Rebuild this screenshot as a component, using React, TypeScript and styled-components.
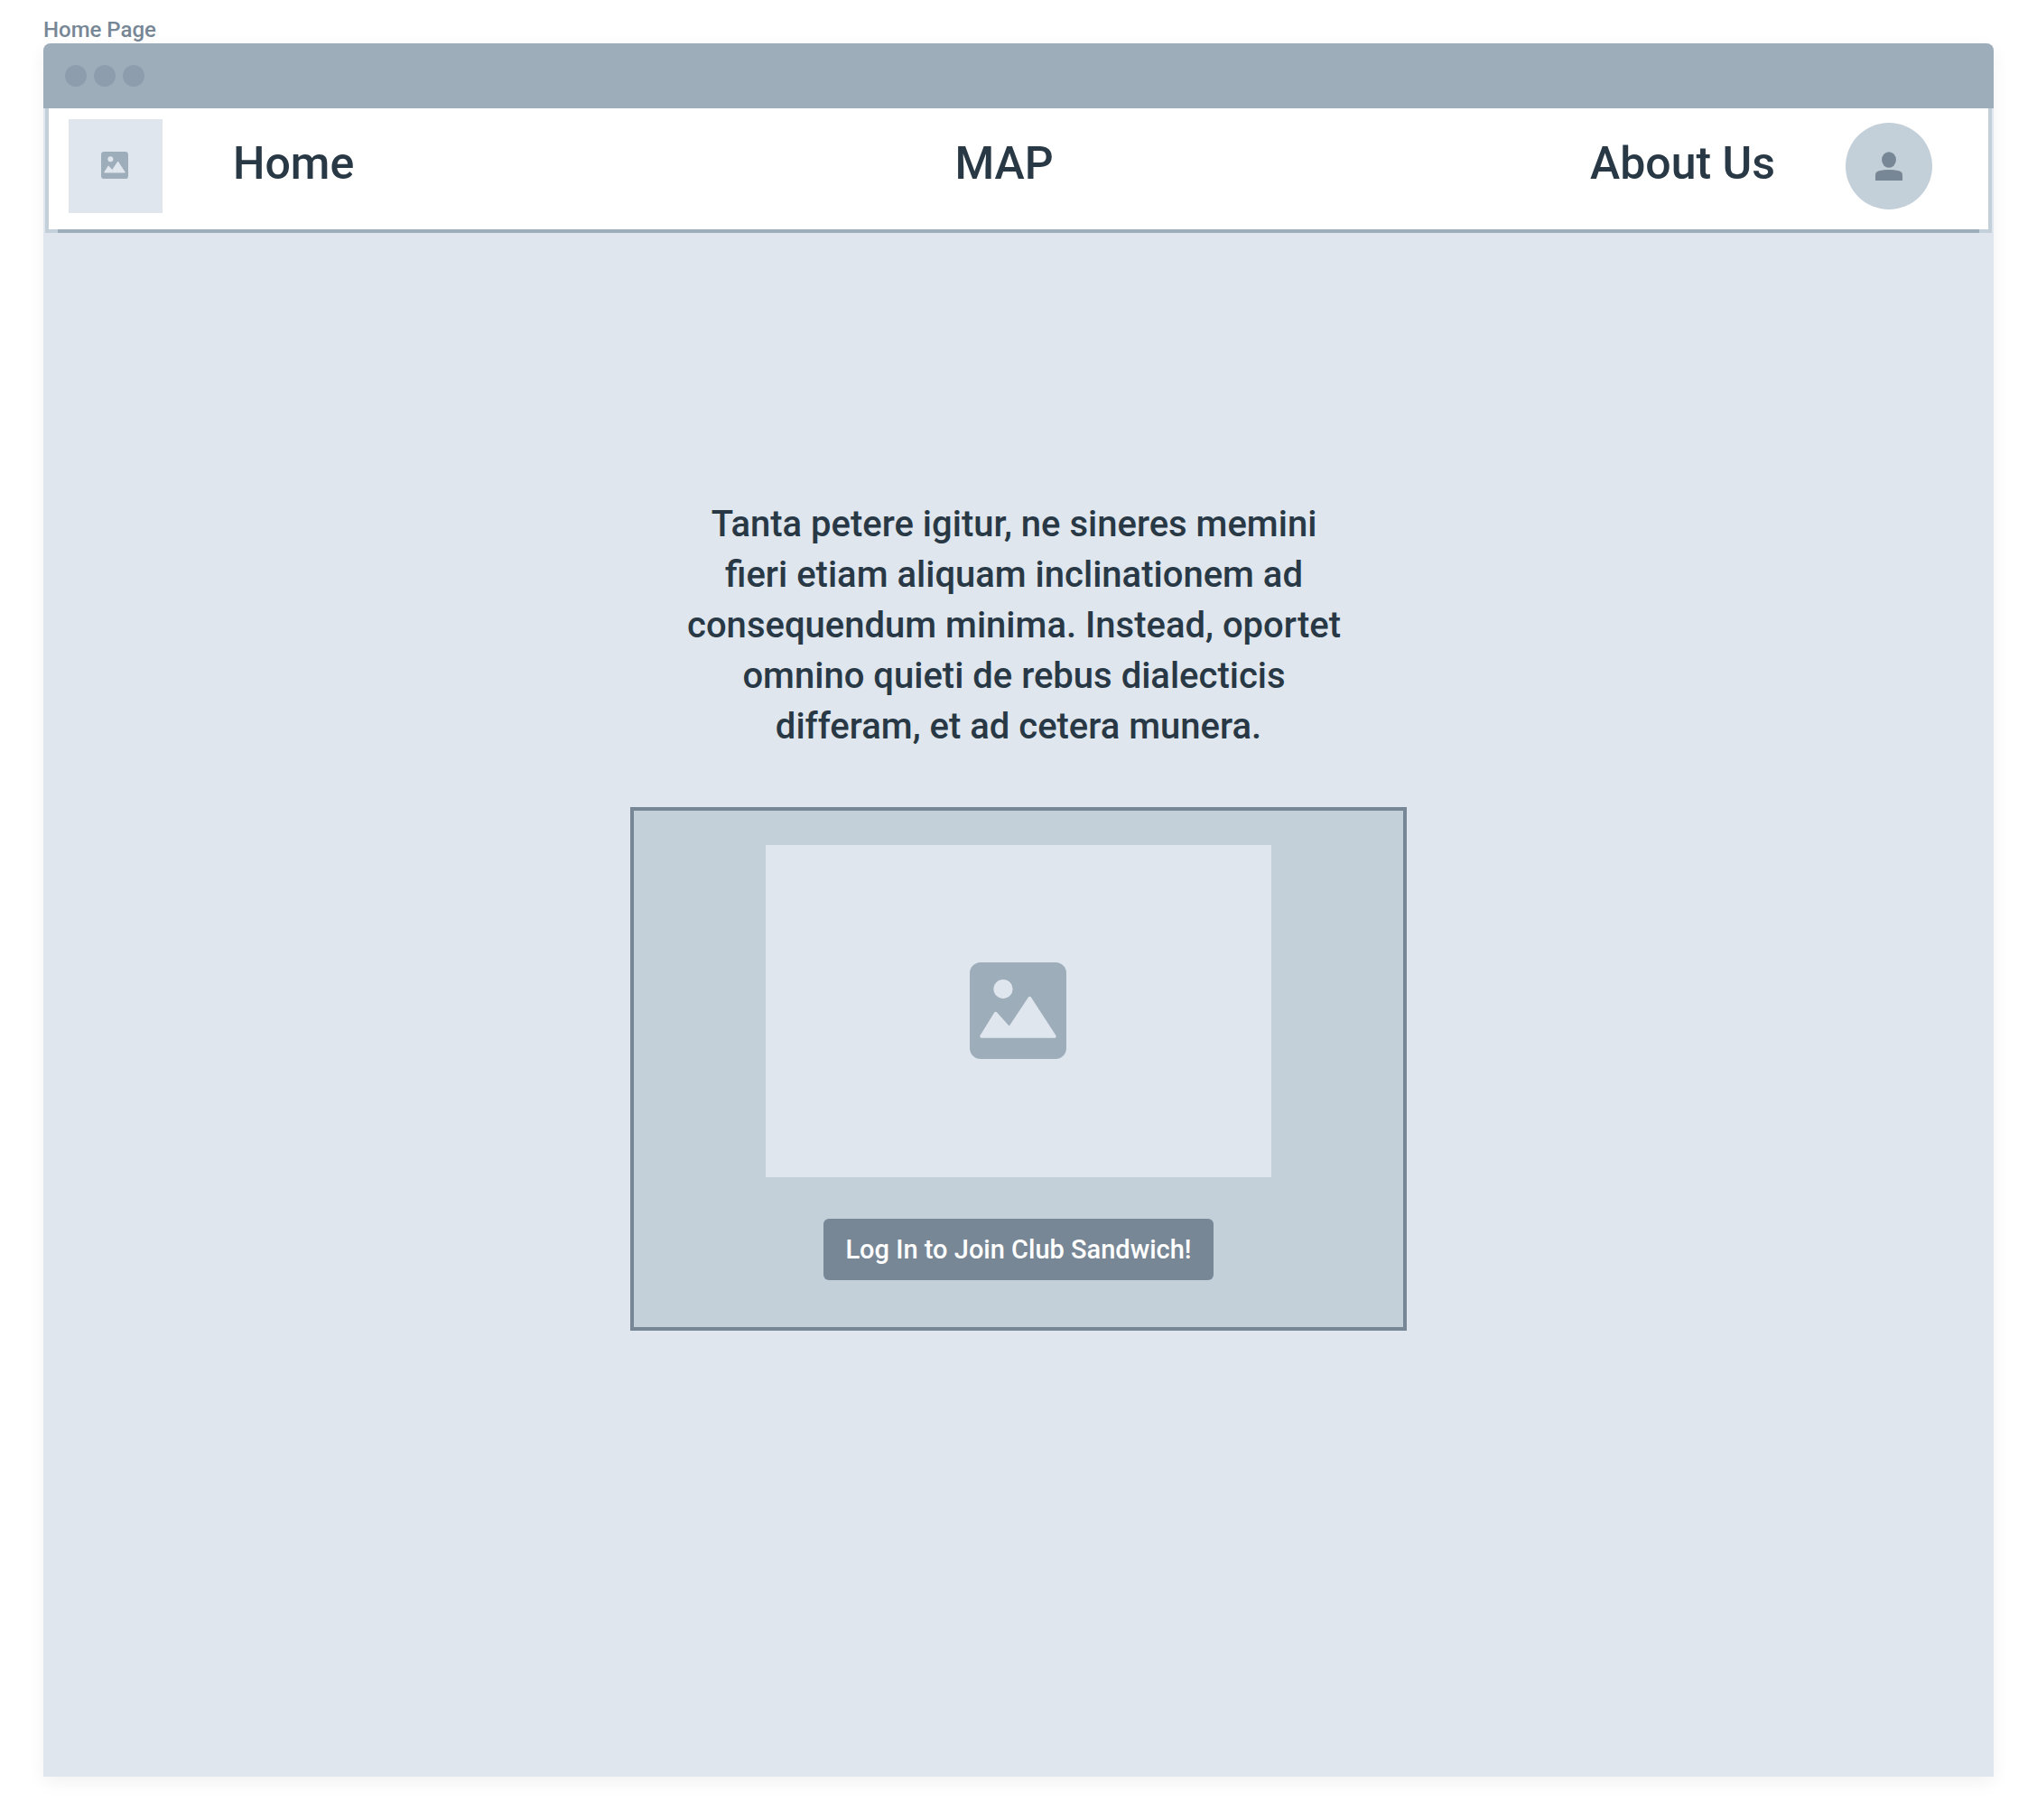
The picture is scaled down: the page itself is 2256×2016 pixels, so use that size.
import React from "react";
import styled, { createGlobalStyle } from "styled-components";

const color = {
  canvas: "#ffffff",
  mist: "#dfe6ee",
  haze: "#c3cfd9",
  steel: "#9eadba",
  dot: "#8e9dad",
  slate: "#788796",
  ink: "#283845",
};

const GlobalStyle = createGlobalStyle`
  *, *::before, *::after { box-sizing: border-box; }
  body {
    margin: 0;
    background: ${color.canvas};
    color: ${color.ink};
    font-family: Roboto, "Liberation Sans", sans-serif;
    font-weight: 500;
  }
`;

const Page = styled.div`
  display: flex;
  flex-direction: column;
  min-height: 100vh;
  padding: 0 48px 48px;
`;

const FrameLabel = styled.h1`
  margin: 0;
  padding-top: 18px;
  font-size: 24px;
  font-weight: 500;
  line-height: 30px;
  color: ${color.slate};
`;

const BrowserWindow = styled.div`
  flex: 1;
  display: flex;
  flex-direction: column;
  background: ${color.mist};
  border-radius: 8px 8px 0 0;
  box-shadow: 0 6px 20px rgba(0, 0, 0, 0.06);
`;

const TitleBar = styled.div`
  display: flex;
  align-items: center;
  gap: 8px;
  height: 72px;
  padding: 0 24px;
  background: ${color.steel};
  border-radius: 8px 8px 0 0;
`;

const WindowDot = styled.span`
  width: 24px;
  height: 24px;
  border-radius: 50%;
  background: ${color.dot};
`;

const Header = styled.header`
  margin: 0 2px;
  padding: 0 4px;
  background: ${color.haze};
`;

const NavBar = styled.nav`
  display: flex;
  align-items: center;
  gap: 78px;
  padding: 12px 62px 18px 22px;
  background: ${color.canvas};
`;

const HeaderRule = styled.div`
  height: 4px;
  margin: 0 10px;
  background: ${color.steel};
`;

const Logo = styled.a`
  display: flex;
  align-items: center;
  justify-content: center;
  width: 104px;
  height: 104px;
  padding: 0 2px 2px 0;
  background: ${color.mist};
`;

const NavLinks = styled.ul`
  flex: 1;
  display: grid;
  grid-template-columns: 1fr auto 1fr;
  margin: 0;
  padding: 0 0 6px;
  list-style: none;
`;

const NavItem = styled.li<{ $align: "left" | "center" | "right" }>`
  text-align: ${(p) => p.$align};
`;

const NavLink = styled.a`
  font-size: 50px;
  line-height: 64px;
  color: ${color.ink};
  text-decoration: none;
`;

const Avatar = styled.button`
  display: flex;
  align-items: center;
  justify-content: center;
  width: 96px;
  height: 96px;
  padding: 0;
  border: 0;
  border-radius: 50%;
  background: ${color.haze};
`;

const Main = styled.main`
  display: flex;
  flex-direction: column;
  align-items: center;
  gap: 61px;
  padding: 295px 48px;
`;

const Intro = styled.p`
  margin: 0;
  font-size: 40px;
  line-height: 56px;
  text-align: center;
`;

const Card = styled.section`
  display: flex;
  flex-direction: column;
  align-items: center;
  gap: 46px;
  width: 100%;
  max-width: 860px;
  padding: 38px 48px 52px;
  border: 4px solid ${color.slate};
  background: ${color.haze};
`;

const Picture = styled.div`
  display: flex;
  align-items: center;
  justify-content: center;
  width: 100%;
  max-width: 560px;
  height: 368px;
  padding: 0 2px 2px 0;
  background: ${color.mist};
`;

const LoginButton = styled.button`
  min-width: 432px;
  padding: 16px 24px;
  border: 0;
  border-radius: 6px;
  background: ${color.slate};
  color: ${color.canvas};
  font: inherit;
  font-size: 29px;
  line-height: 36px;
`;

function ImageIcon({ size }: { size: number }) {
  return (
    <svg width={size} height={size} viewBox="0 0 107 107" aria-hidden="true">
      <rect width="107" height="107" rx="12" fill={color.steel} />
      <circle cx="37" cy="29.6" r="10.6" fill={color.mist} />
      <path
        d="M13 82 28.7 56.5 44 73.3 66.4 39.5 94 82Z"
        fill={color.mist}
        stroke={color.mist}
        strokeWidth="3.4"
        strokeLinejoin="round"
      />
    </svg>
  );
}

function PersonIcon() {
  return (
    <svg width="30" height="32" viewBox="0 0 30 32" fill={color.slate} aria-hidden="true">
      <ellipse cx="15" cy="9" rx="7.9" ry="8.8" />
      <path d="M0 32V26.5C0 23 1.5 22 4 21.2Q15 18.6 26 21.2C28.5 22 30 23 30 26.5V32Z" />
    </svg>
  );
}

const introLines = [
  "Tanta petere igitur, ne sineres memini",
  "fieri etiam aliquam inclinationem ad",
  "consequendum minima. Instead, oportet",
  "omnino quieti de rebus dialecticis",
];

export default function App() {
  return (
    <>
      <GlobalStyle />
      <Page>
        <FrameLabel>Home Page</FrameLabel>
        <BrowserWindow>
          <TitleBar>
            <WindowDot />
            <WindowDot />
            <WindowDot />
          </TitleBar>
          <Header>
            <NavBar>
              <Logo href="#" aria-label="Club Sandwich">
                <ImageIcon size={30} />
              </Logo>
              <NavLinks>
                <NavItem $align="left">
                  <NavLink href="#home">Home</NavLink>
                </NavItem>
                <NavItem $align="center">
                  <NavLink href="#map">MAP</NavLink>
                </NavItem>
                <NavItem $align="right">
                  <NavLink href="#about">About Us</NavLink>
                </NavItem>
              </NavLinks>
              <Avatar type="button" aria-label="Account">
                <PersonIcon />
              </Avatar>
            </NavBar>
            <HeaderRule />
          </Header>
          <Main>
            <Intro>
              {introLines.map((line) => (
                <React.Fragment key={line}>
                  {line}
                  {"\u00a0"}
                  <br />
                </React.Fragment>
              ))}
              differam, et ad cetera munera.
            </Intro>
            <Card>
              <Picture>
                <ImageIcon size={107} />
              </Picture>
              <LoginButton type="button">Log In to Join Club Sandwich!</LoginButton>
            </Card>
          </Main>
        </BrowserWindow>
      </Page>
    </>
  );
}
